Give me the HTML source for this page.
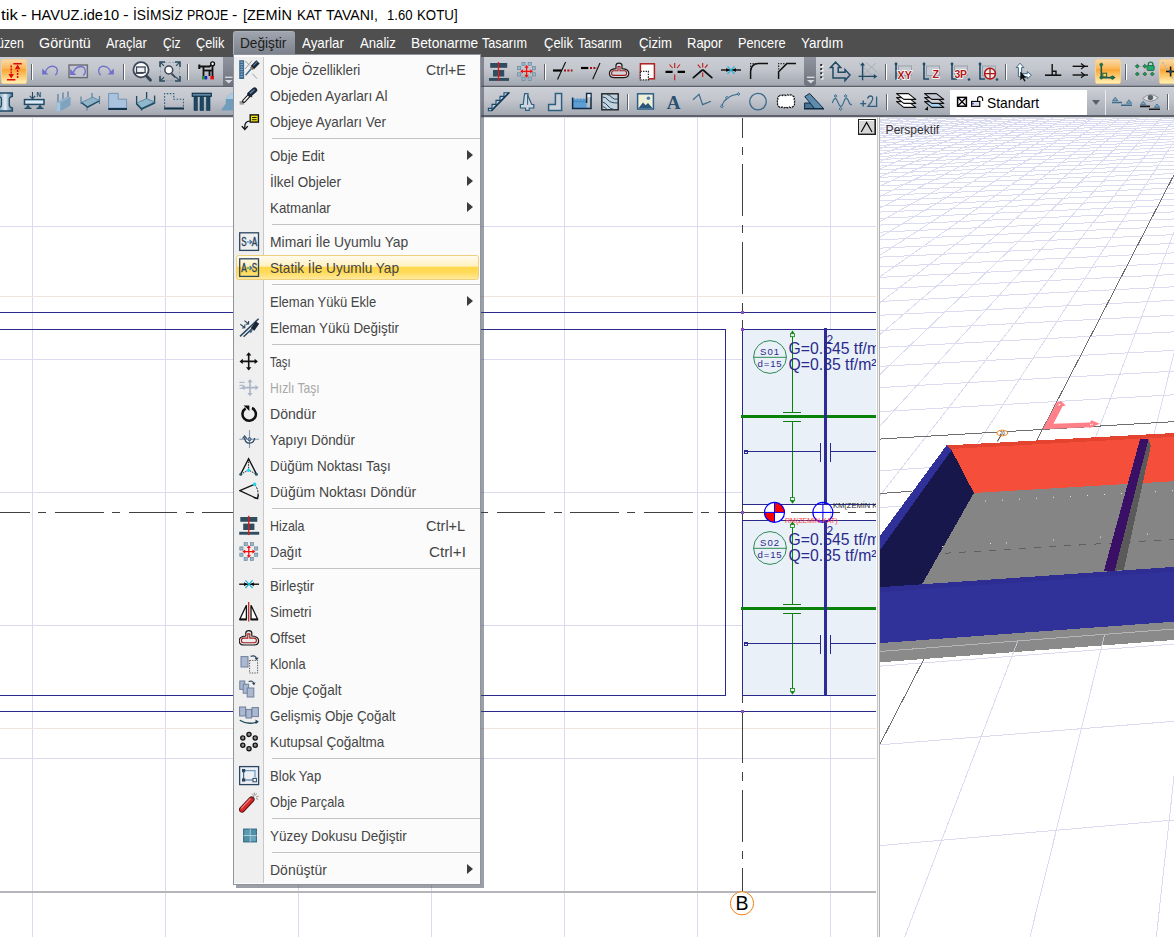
<!DOCTYPE html>
<html lang="tr"><head><meta charset="utf-8"><title>ideCAD Statik</title><style>
*{box-sizing:border-box;margin:0;padding:0}
html,body{width:1174px;height:937px;overflow:hidden;background:#fff;font-family:"Liberation Sans",sans-serif;}
#root{position:relative;width:1174px;height:937px;overflow:hidden;background:#fff}
svg{position:absolute;overflow:hidden}
.tx{position:absolute;white-space:pre;transform-origin:0 0}
#title{position:absolute;left:0;top:0;width:1174px;height:29px;background:#fff}
#menubar{position:absolute;left:0;top:29px;width:1174px;height:28px;background:#4f4f4f}
#tab{position:absolute;left:233px;top:2px;width:62px;height:26px;border-radius:3px 3px 0 0;background:linear-gradient(#9fa4ae,#787e89);border-left:1px solid #aeb2bb;border-top:1px solid #aab0b8}
.tb{position:absolute;left:0;width:1174px}
#tb1{top:57px;height:30px;background:linear-gradient(#cbced5 0px,#c3c6cd 12px,#a3a8b2 28px,#8e939c 28.5px,#5d6169 29px,#5d6169 30px)}
#tb2{top:87px;height:31px;background:linear-gradient(#d6d8dd 0px,#cbced5 1px,#c3c6cd 12px,#a3a8b2 28px,#5d6169 28.5px,#5d6169 29.5px,#c9ccd2 30px,#e4e5e9 31px)}
.cap{position:absolute;top:57px;height:29px;background:linear-gradient(#90959f,#6c717b)}
.sepv{position:absolute;width:2px;height:16px;border-left:1px solid #5d626c;background:#fff}
.act{position:absolute;height:25px;border-radius:2px;border:1px solid #f6cf8c;background:linear-gradient(#fbd9a5 0%,#fbb554 38%,#f9a534 42%,#fdd07a 75%,#fff0b4 100%)}
#canvas{position:absolute;left:0;top:118px;width:876px;height:819px;background:#fff;overflow:hidden}
#persp{position:absolute;left:880px;top:118px;width:294px;height:819px;background:#fff;overflow:hidden}
#split{position:absolute;left:877px;top:117px;width:3px;height:820px;background:linear-gradient(90deg,#c6c6c6 0,#c6c6c6 1px,#f4f4f4 1px,#f4f4f4 2px,#b2b2b2 2px,#b2b2b2 3px)}
#combo{position:absolute;left:950px;top:90px;width:137px;height:25px;background:#fff}
#combobtn{position:absolute;left:1087px;top:90px;width:19px;height:25px;background:linear-gradient(#c9ccd3,#a5aab4);border-right:1px solid #e8eaee}
#combobtn i{position:absolute;left:5px;top:10px;border-top:5px solid #5a5f69;border-left:4.5px solid transparent;border-right:4.5px solid transparent}
#popup{position:absolute;left:233px;top:54px;width:248px;height:831px;background:#fbfbfb;border:1px solid #8f949e;box-shadow:3px 3px 0 rgba(66,70,84,0.52)}
#popup .ic{position:absolute;left:0;top:2px;width:30px;height:826px;background:#efefef;border-right:1px solid #c8c8c8}
#popup .sep{position:absolute;left:38px;width:208px;height:1px;background:#c2c2c2}
#popup .arr{position:absolute;left:233px;width:0;height:0;border-left:6px solid #3c3c3c;border-top:5.5px solid transparent;border-bottom:5.5px solid transparent}
#popup .hl{position:absolute;left:1.5px;width:243.5px;height:25px;border:1px solid #ecd07c;border-radius:2.5px;background:linear-gradient(#fffbee 0%,#fff1c0 44%,#ffd74a 50%,#ffdb5c 72%,#ffe99e 100%)}
</style></head><body><div id="root">
<div id="title"><span class="tx" id="x1" style="left:1.30px;top:4.63px;font-size:15.5px;line-height:20px;font-family:'Liberation Sans',sans-serif;font-weight:400;color:#000;transform:scaleX(1.0807);">tik </span><span class="tx" id="x2" style="left:21.13px;top:4.63px;font-size:15.5px;line-height:20px;font-family:'Liberation Sans',sans-serif;font-weight:400;color:#000;transform:scaleX(1.1418);">- </span><span class="tx" id="x3" style="left:31.00px;top:4.63px;font-size:15.5px;line-height:20px;font-family:'Liberation Sans',sans-serif;font-weight:400;color:#000;transform:scaleX(0.9420);">HAVUZ.ide10 </span><span class="tx" id="x4" style="left:123.30px;top:4.63px;font-size:15.5px;line-height:20px;font-family:'Liberation Sans',sans-serif;font-weight:400;color:#000;transform:scaleX(1.1097);">- </span><span class="tx" id="x5" style="left:132.91px;top:4.63px;font-size:15.5px;line-height:20px;font-family:'Liberation Sans',sans-serif;font-weight:400;color:#000;transform:scaleX(0.8909);">İSİMSİZ </span><span class="tx" id="x6" style="left:187.03px;top:4.63px;font-size:15.5px;line-height:20px;font-family:'Liberation Sans',sans-serif;font-weight:400;color:#000;transform:scaleX(0.7992);">PROJE </span><span class="tx" id="x7" style="left:232.27px;top:4.63px;font-size:15.5px;line-height:20px;font-family:'Liberation Sans',sans-serif;font-weight:400;color:#000;transform:scaleX(1.0303);">- </span><span class="tx" id="x8" style="left:242.77px;top:4.63px;font-size:15.5px;line-height:20px;font-family:'Liberation Sans',sans-serif;font-weight:400;color:#000;transform:scaleX(0.9314);">[ZEMİN </span><span class="tx" id="x9" style="left:296.92px;top:4.63px;font-size:15.5px;line-height:20px;font-family:'Liberation Sans',sans-serif;font-weight:400;color:#000;transform:scaleX(0.8620);">KAT </span><span class="tx" id="x10" style="left:326.22px;top:4.63px;font-size:15.5px;line-height:20px;font-family:'Liberation Sans',sans-serif;font-weight:400;color:#000;transform:scaleX(0.9126);">TAVANI,  </span><span class="tx" id="x11" style="left:386.86px;top:4.63px;font-size:15.5px;line-height:20px;font-family:'Liberation Sans',sans-serif;font-weight:400;color:#000;transform:scaleX(0.8448);">1.60 </span><span class="tx" id="x12" style="left:417.10px;top:4.63px;font-size:15.5px;line-height:20px;font-family:'Liberation Sans',sans-serif;font-weight:400;color:#000;transform:scaleX(0.8572);">KOTU]</span></div>
<div id="menubar"><div id="tab"></div><span class="tx" id="x13" style="left:-3.30px;top:5.48px;font-size:13.9px;line-height:18px;font-family:'Liberation Sans',sans-serif;font-weight:400;color:#fff;transform:scaleX(0.8900);">üzen</span><span class="tx" id="x14" style="left:39.12px;top:5.48px;font-size:13.9px;line-height:18px;font-family:'Liberation Sans',sans-serif;font-weight:400;color:#fff;transform:scaleX(1.0329);">Görüntü</span><span class="tx" id="x15" style="left:106.39px;top:5.48px;font-size:13.9px;line-height:18px;font-family:'Liberation Sans',sans-serif;font-weight:400;color:#fff;transform:scaleX(0.9258);">Araçlar</span><span class="tx" id="x16" style="left:163.26px;top:5.48px;font-size:13.9px;line-height:18px;font-family:'Liberation Sans',sans-serif;font-weight:400;color:#fff;transform:scaleX(0.8715);">Çiz</span><span class="tx" id="x17" style="left:196.37px;top:5.48px;font-size:13.9px;line-height:18px;font-family:'Liberation Sans',sans-serif;font-weight:400;color:#fff;transform:scaleX(0.9161);">Çelik</span><span class="tx" id="x18" style="left:240.32px;top:5.48px;font-size:13.9px;line-height:18px;font-family:'Liberation Sans',sans-serif;font-weight:400;color:#1c1c1c;transform:scaleX(0.9824);">Değiştir</span><span class="tx" id="x19" style="left:302.35px;top:5.48px;font-size:13.9px;line-height:18px;font-family:'Liberation Sans',sans-serif;font-weight:400;color:#fff;transform:scaleX(0.9585);">Ayarlar</span><span class="tx" id="x20" style="left:360.12px;top:5.48px;font-size:13.9px;line-height:18px;font-family:'Liberation Sans',sans-serif;font-weight:400;color:#fff;transform:scaleX(0.9459);">Analiz</span><span class="tx" id="x21" style="left:410.55px;top:5.48px;font-size:13.9px;line-height:18px;font-family:'Liberation Sans',sans-serif;font-weight:400;color:#fff;transform:scaleX(0.9893);">Betonarme </span><span class="tx" id="x22" style="left:481.97px;top:5.48px;font-size:13.9px;line-height:18px;font-family:'Liberation Sans',sans-serif;font-weight:400;color:#fff;transform:scaleX(0.9113);">Tasarım</span><span class="tx" id="x23" style="left:544.19px;top:5.48px;font-size:13.9px;line-height:18px;font-family:'Liberation Sans',sans-serif;font-weight:400;color:#fff;transform:scaleX(0.9359);">Çelik </span><span class="tx" id="x24" style="left:577.70px;top:5.48px;font-size:13.9px;line-height:18px;font-family:'Liberation Sans',sans-serif;font-weight:400;color:#fff;transform:scaleX(0.8878);">Tasarım</span><span class="tx" id="x25" style="left:639.04px;top:5.48px;font-size:13.9px;line-height:18px;font-family:'Liberation Sans',sans-serif;font-weight:400;color:#fff;transform:scaleX(0.9484);">Çizim</span><span class="tx" id="x26" style="left:686.86px;top:5.48px;font-size:13.9px;line-height:18px;font-family:'Liberation Sans',sans-serif;font-weight:400;color:#fff;transform:scaleX(0.9351);">Rapor</span><span class="tx" id="x27" style="left:737.69px;top:5.48px;font-size:13.9px;line-height:18px;font-family:'Liberation Sans',sans-serif;font-weight:400;color:#fff;transform:scaleX(0.9186);">Pencere</span><span class="tx" id="x28" style="left:801.05px;top:5.48px;font-size:13.9px;line-height:18px;font-family:'Liberation Sans',sans-serif;font-weight:400;color:#fff;transform:scaleX(0.9667);">Yardım</span></div>
<div class="tb" id="tb1"></div><div class="tb" id="tb2"></div><div class="cap" style="left:223px;width:10px"></div><div class="cap" style="left:804px;width:12px;border-radius:0 0 3px 3px"></div><div class="sepv" style="left:31px;top:64px"></div><div class="sepv" style="left:123px;top:64px"></div><div class="sepv" style="left:187px;top:64px"></div><div class="sepv" style="left:544px;top:64px"></div><div class="sepv" style="left:885px;top:64px"></div><div class="sepv" style="left:1005px;top:64px"></div><div class="sepv" style="left:1125px;top:64px"></div><div class="sepv" style="left:627px;top:94px"></div><div class="sepv" style="left:886px;top:94px"></div><div class="sepv" style="left:1167px;top:94px"></div><div class="act" style="left:1px;top:59px;width:26px"></div><div class="act" style="left:1095px;top:59px;width:26px"></div><div class="act" style="left:1159px;top:59px;width:26px"></div><div id="combo"><span class="tx" id="x29" style="left:37.36px;top:3.78px;font-size:13.9px;line-height:18px;font-family:'Liberation Sans',sans-serif;font-weight:400;color:#000;transform:scaleX(0.9934);">Standart</span></div><div id="combobtn"><i></i></div><svg style="left:0;top:57px" width="1174" height="61" viewBox="0 57 1174 61" font-family="Liberation Sans, sans-serif"><g stroke="#e00a0a" fill="none" stroke-width="1.5"><path d="M7 79.8H15.4M13.3 63.8H21.8"/><path d="M11.2 65.5V76" stroke-dasharray="2 1"/><path d="M17.6 78V67" stroke-dasharray="2 1"/></g><path d="M8.4 74H14L11.2 78.6ZM14.8 69.2H20.4L17.6 64.6Z" fill="#e00a0a"/><g transform="translate(50 71)"><path d="M-4.5 1.2C-3 -4.5 3 -6.3 6.3 -3.2C8 -1.2 7.6 2.2 5.3 4.3" fill="none" stroke="#7070cc" stroke-width="1.35"/><path d="M-7.8 -2.4V3.6H-1.6Z" fill="#7070cc"/></g><rect x="69" y="65" width="18.4" height="12.6" fill="#c3c5d0" stroke="#6c6c76" stroke-width="1.4"/><g transform="translate(78 71.3)"><path d="M-4.5 1.2C-3 -4.5 3 -6.3 6.3 -3.2C8 -1.2 7.6 2.2 5.3 4.3" fill="none" stroke="#7070cc" stroke-width="1.35"/><path d="M-7.8 -2.4V3.6H-1.6Z" fill="#7070cc"/></g><g transform="translate(106 71) scale(-1 1)"><path d="M-4.5 1.2C-3 -4.5 3 -6.3 6.3 -3.2C8 -1.2 7.6 2.2 5.3 4.3" fill="none" stroke="#7070cc" stroke-width="1.35"/><path d="M-7.8 -2.4V3.6H-1.6Z" fill="#7070cc"/></g><path d="M146.5 76L150.3 80" stroke="#3a4656" stroke-width="3.2" stroke-linecap="round"/><circle cx="141" cy="69.8" r="7.6" fill="#fff" stroke="#3a4656" stroke-width="1.8"/><rect x="136.5" y="67" width="8.6" height="5.6" fill="#eef1f6" stroke="#3a4656" stroke-width="1.3"/><path d="M135 73.4H143.5" stroke="#3a4656" stroke-width="1"/><rect x="160.5" y="62.5" width="19" height="18" fill="none" stroke="#8fa2b4" stroke-dasharray="2 2"/><path d="M160 67V62H165M175 62H180V67M180 76V81H175M165 81H160V76" fill="none" stroke="#2b4a5e" stroke-width="1.6"/><path d="M161 62.8L164 65.8M179 62.8L176 65.8M161 80.2L164 77.2M179 80.2L176 77.2" stroke="#2b4a5e" stroke-width="1.2"/><path d="M171.5 73.5L175.6 77.6" stroke="#3a4656" stroke-width="1.8"/><circle cx="168.8" cy="70" r="3.9" fill="#fff" stroke="#3a4656" stroke-width="1.5"/><g fill="none" stroke="#111" stroke-width="1.8"><path d="M199.5 66.5H209.5L212 64.5"/><path d="M203.5 67V76M209.5 70V76M212.5 66V76"/><path d="M203.5 70.5H212"/><circle cx="212.6" cy="63.8" r="1.9" fill="#fff" stroke-width="1.4"/><path d="M199.3 64.5V69" stroke-width="2"/></g><rect x="202" y="76" width="2.6" height="3.4" fill="#1a9a1a"/><rect x="204.6" y="76" width="2.6" height="3.4" fill="#1a1ad0"/><rect x="210.4" y="76" width="3.6" height="3.4" fill="#e01010"/><path d="M225.0 77.3H232.5" stroke="#d6d8dd" stroke-width="1.4"/><path d="M225.0 80L228.7 83.5L232.5 80Z" fill="#d6d8dd"/><path d="M807.0 77.3H814.5" stroke="#d6d8dd" stroke-width="1.4"/><path d="M807.0 80L810.7 83.5L814.5 80Z" fill="#d6d8dd"/><rect x="490.2" y="63" width="17" height="4.8" fill="#2e4d5f"/><rect x="493" y="70" width="11.2" height="6.5" fill="#2e4d5f"/><rect x="489" y="78" width="20" height="2.9" fill="#2e4d5f"/><path d="M498.5 62V81" stroke="#f01010" stroke-width="1.3"/><rect x="532.4" y="72.8" width="3.2" height="3.2" fill="#9ab6c9" stroke="#5f8197" stroke-width="0.6"/><rect x="528.1" y="77.1" width="3.2" height="3.2" fill="#9ab6c9" stroke="#5f8197" stroke-width="0.6"/><rect x="521.9" y="77.1" width="3.2" height="3.2" fill="#9ab6c9" stroke="#5f8197" stroke-width="0.6"/><rect x="517.6" y="72.8" width="3.2" height="3.2" fill="#9ab6c9" stroke="#5f8197" stroke-width="0.6"/><rect x="517.6" y="66.6" width="3.2" height="3.2" fill="#9ab6c9" stroke="#5f8197" stroke-width="0.6"/><rect x="521.9" y="62.3" width="3.2" height="3.2" fill="#9ab6c9" stroke="#5f8197" stroke-width="0.6"/><rect x="528.1" y="62.3" width="3.2" height="3.2" fill="#9ab6c9" stroke="#5f8197" stroke-width="0.6"/><rect x="532.4" y="66.6" width="3.2" height="3.2" fill="#9ab6c9" stroke="#5f8197" stroke-width="0.6"/><path d="M521.5 71.3H531.7M526.6 66.2V76.4" stroke="#f01010" stroke-width="1.3"/><path d="M520.2 71.3L523 69.2V73.4ZM533 71.3L530.2 69.2V73.4ZM526.6 64.9L524.5 67.7H528.7ZM526.6 77.7L524.5 74.9H528.7Z" fill="#f01010"/><path d="M553 70.5H562" stroke="#000" stroke-width="2.2"/><path d="M565.6 62L557.5 79.5" stroke="#111" stroke-width="1.1"/><path d="M564 70.5H572.5" stroke="#a01010" stroke-width="1.8" stroke-dasharray="2 1.4"/><path d="M581 68H588.3" stroke="#000" stroke-width="2.2"/><path d="M600 63L592.7 79.2" stroke="#111" stroke-width="1.1"/><path d="M590 68H597" stroke="#a01010" stroke-width="1.8" stroke-dasharray="2 1.4"/><path d="M616 65.5Q616 63.2 619 63.2Q622 63.2 622 65.5V68.6Q628.8 69 628.8 73.3Q628.8 77.6 624 77.6H614Q609.4 77.6 609.4 73.3Q609.4 69 616 68.6Z" fill="#d8dae0" stroke="#1a1a1a" stroke-width="1.2"/><path d="M618 66.5H620V70.7H624.5Q626.6 70.9 626.6 73.2Q626.6 75.3 624.5 75.4H613.7Q611.6 75.3 611.6 73.2Q611.6 70.9 613.7 70.7H618Z" fill="#d2d5db" stroke="#a41c1c" stroke-width="1.1"/><rect x="640.4" y="63.8" width="14" height="15" fill="#fff" stroke="#b02020" stroke-width="1.5"/><rect x="640.4" y="71.3" width="8" height="8.6" fill="#fff" stroke="#222" stroke-width="1.2" stroke-dasharray="1.4 1.2"/><path d="M665.5 71.8H672.6M677.6 71.8H685" stroke="#000" stroke-width="2.3"/><path d="M674.7 63V68M674.7 74.5V80.3M669.5 64.5L672.5 68M680 64.5L677 68" stroke="#c01818" stroke-width="1.1"/><path d="M693.4 77.6L702 70.2M703.4 70.2L711.8 77.6" stroke="#111" stroke-width="1.8" stroke-linecap="round"/><path d="M702.7 63V67.6M702.7 72.5V77M697.8 64.6L700.5 67.8M707.6 64.6L704.9 67.8" stroke="#c01818" stroke-width="1.1"/><path d="M721 70H741" stroke="#000" stroke-width="1.3"/><path d="M729.5 70L726.3 68V72ZM732.6 70L735.8 68V72Z" fill="#000"/><path d="M727.5 66.3L734.5 73.8M734.5 66.3L727.5 73.8" stroke="#18b4d8" stroke-width="1.2"/><path d="M750.6 79V71.5Q751 63.8 758.5 63.6H768" fill="none" stroke="#111" stroke-width="1.5"/><path d="M750.6 69.5V63.6H756.5" fill="none" stroke="#222" stroke-width="1.2" stroke-dasharray="1.3 1.3"/><path d="M778.6 79V71.8L786.8 63.6H796" fill="none" stroke="#111" stroke-width="1.5"/><path d="M778.6 69.5V63.6H784.5" fill="none" stroke="#222" stroke-width="1.2" stroke-dasharray="1.3 1.3"/><rect x="821" y="64.8" width="2.4" height="2.4" fill="#fff"/><rect x="820.2" y="64.0" width="2" height="2" fill="#2a2e36"/><rect x="821" y="68.89999999999999" width="2.4" height="2.4" fill="#fff"/><rect x="820.2" y="68.1" width="2" height="2" fill="#2a2e36"/><rect x="821" y="73.0" width="2.4" height="2.4" fill="#fff"/><rect x="820.2" y="72.2" width="2" height="2" fill="#2a2e36"/><rect x="821" y="77.1" width="2.4" height="2.4" fill="#fff"/><rect x="820.2" y="76.3" width="2" height="2" fill="#2a2e36"/><path d="M830.5 67.6L835.6 62.2L840.7 67.6H838.2V72.3H845V69.6L850 75.1L845 80.6V78H833V67.6Z" fill="none" stroke="#1f4a66" stroke-width="1.5" stroke-linejoin="miter"/><path d="M859 63L875 78M876 63L861 77M866 62.5L877 72" stroke="#a9adb9" stroke-width="1"/><path d="M862.6 64V80.3M858.6 76.4H875.5" stroke="#1f4a66" stroke-width="1.4"/><path d="M862.6 62.2L860.2 65.6H865ZM877.2 76.4L873.8 74V78.8Z" fill="#1f4a66"/><path d="M896 64V79H901" fill="none" stroke="#1f4a66" stroke-width="1.6"/><circle cx="896" cy="64" r="1.4" fill="#1f4a66"/><rect x="898.5" y="66" width="13" height="9.5" fill="#c6cad2" stroke="#9aa0aa" stroke-width="1"/><text x="897.6" y="79.4" font-size="10.6" font-weight="700" fill="#b01414" stroke="#fff" stroke-width="1.6" paint-order="stroke" letter-spacing="0">XY</text><path d="M924 64V79H929" fill="none" stroke="#1f4a66" stroke-width="1.6"/><circle cx="924" cy="64" r="1.4" fill="#1f4a66"/><rect x="926.5" y="66" width="13" height="9.5" fill="#c6cad2" stroke="#9aa0aa" stroke-width="1"/><text x="932.6" y="78.4" font-size="10.6" font-weight="700" fill="#b01414" stroke="#fff" stroke-width="1.6" paint-order="stroke" letter-spacing="0">Z</text><path d="M952 64V79H957" fill="none" stroke="#1f4a66" stroke-width="1.6"/><circle cx="952" cy="64" r="1.4" fill="#1f4a66"/><rect x="954.5" y="66" width="13" height="9.5" fill="#c6cad2" stroke="#9aa0aa" stroke-width="1"/><text x="954.6" y="78.4" font-size="10.4" font-weight="700" fill="#b01414" stroke="#fff" stroke-width="1.6" paint-order="stroke" letter-spacing="-0.3">3P</text><circle cx="969" cy="79.5" r="1.3" fill="#1f4a66"/><path d="M980 64V79H985" fill="none" stroke="#1f4a66" stroke-width="1.6"/><circle cx="980" cy="64" r="1.4" fill="#1f4a66"/><rect x="982.5" y="66" width="13" height="9.5" fill="#c6cad2" stroke="#9aa0aa" stroke-width="1"/><circle cx="990" cy="73.6" r="5.4" fill="#eee" stroke="#b01414" stroke-width="1.5"/><path d="M984.6 73.6H995.4M990 68.2V79" stroke="#b01414" stroke-width="1.3"/><circle cx="997" cy="79.5" r="1.3" fill="#1f4a66"/><path d="M1016.2 67.5L1020 63.2L1023.8 67.5H1021.6V73.7H1027.3V71.6L1031.4 75.2L1027.3 78.8V76.7H1018.4V67.5Z" fill="#fff" stroke="#3a6a8a" stroke-width="1"/><path d="M1020.3 71.5V80.3L1022.5 78.3L1024.3 81.6L1025.6 80.9L1023.9 77.7H1026.6Z" fill="#111"/><path d="M1045 75.2H1061.3" stroke="#111" stroke-width="1.6"/><path d="M1052.2 64V75" stroke="#111" stroke-width="1.4"/><path d="M1052.5 71.3H1056V75" fill="none" stroke="#111" stroke-width="1.4"/><path d="M1072.6 66.3 H1088" stroke="#111" stroke-width="1.4"/><path d="M1081 63.5 L1084.6 66.3 L1081 69.1" fill="none" stroke="#111" stroke-width="1.2"/><path d="M1072.6 75 H1088" stroke="#111" stroke-width="1.4"/><path d="M1081 72.2 L1084.6 75 L1081 77.8" fill="none" stroke="#111" stroke-width="1.2"/><rect x="1102.8" y="73.2" width="3.8" height="3.8" fill="#f4d84a" stroke="#1e5a4e" stroke-width="1"/><path d="M1101.3 64.2V77.6H1114" fill="none" stroke="#1e5a4e" stroke-width="1.6"/><path d="M1115.6 77.6L1112.4 75.2V80Z" fill="#1e5a4e"/><circle cx="1101.3" cy="64.6" r="1.4" fill="#168048" stroke="#1e5a4e" stroke-width="0.8"/><circle cx="1101.3" cy="77.6" r="1.4" fill="#168048" stroke="#1e5a4e" stroke-width="0.8"/><circle cx="1112" cy="77.6" r="1.4" fill="#168048" stroke="#1e5a4e" stroke-width="0.8"/><path d="M1134 66.2H1155M1134 74H1155M1137.3 62V81M1144.8 62V81M1152.3 62V81" stroke="#c9b6c0" stroke-width="1"/><path d="M1137.3 64.2l2 2l-2 2l-2 -2Z" fill="#1a9a50" stroke="#14503c" stroke-width="0.6"/><path d="M1144.8 64.2l2 2l-2 2l-2 -2Z" fill="#1a9a50" stroke="#14503c" stroke-width="0.6"/><path d="M1137.3 72l2 2l-2 2l-2 -2Z" fill="#1a9a50" stroke="#14503c" stroke-width="0.6"/><path d="M1144.8 72l2 2l-2 2l-2 -2Z" fill="#1a9a50" stroke="#14503c" stroke-width="0.6"/><path d="M1152.3 72l2 2l-2 2l-2 -2Z" fill="#1a9a50" stroke="#14503c" stroke-width="0.6"/><path d="M1148.3 66V64.3Q1148.3 62.2 1150.6 62.2Q1152.9 62.2 1152.9 64.3V66" fill="none" stroke="#1a7a4a" stroke-width="1.3"/><rect x="1147" y="65.6" width="7.2" height="4.8" rx="0.8" fill="#22aa66" stroke="#14603c" stroke-width="0.8"/><path d="M1162.5 62L1174 80" stroke="#9ab4cc" stroke-width="1.1" stroke-dasharray="2 1.5"/><path d="M1166 71.6H1176M1170.6 66.5V76.5" stroke="#111" stroke-width="1.5"/><circle cx="1170.6" cy="71.6" r="1.8" fill="#1f4a66"/><defs><linearGradient id="gib" x1="0" x2="1"><stop offset="0" stop-color="#6f97b4"/><stop offset="0.5" stop-color="#e4eef6"/><stop offset="1" stop-color="#4a7592"/></linearGradient></defs><path d="M-2 93H12.4V96.4Q9.3 96.8 9.3 99V105Q9.3 107.4 12.4 107.8V111H-2V107.8Q1.4 107.4 1.4 105V99Q1.4 96.8 -2 96.4Z" fill="url(#gib)" stroke="#1f4a66" stroke-width="1.3"/><rect x="24.5" y="99.6" width="19.5" height="4.8" fill="#dbe8f6" stroke="#1f4a66" stroke-width="1.5"/><path d="M25.5 107.8L28 104.8L30.5 107.8ZM37.5 107.8L40 104.8L42.5 107.8Z" fill="#1f4a66"/><path d="M24.5 108.3H31.5M36.5 108.3H43.5" stroke="#1f4a66" stroke-width="1.2"/><path d="M32.5 92V98.6M29.8 95.8L32.5 98.8L35.2 95.8" fill="none" stroke="#1f4a66" stroke-width="1.1"/><text x="36.6" y="96.6" font-size="6.4" font-weight="700" fill="#1f4a66">N</text><path d="M58 102V94M63 100V92.4M68 98V91.6" stroke="#5a82a0" stroke-width="1.3"/><path d="M56.3 102.5L60.3 102.5L70.6 97V105.6L60.3 111.3H56.3Z" fill="#7fa3bf"/><path d="M56.3 102.5H60.3V111.3H56.3Z" fill="#a7c4dc"/><path d="M56.3 102.5L66.5 97H70.6L60.3 102.5Z" fill="#8fb1cb"/><path d="M81 96.5V104M92 93V98M99.5 96V104M87 103V110.5" stroke="#5a82a0" stroke-width="1.2"/><path d="M81.5 102.3L93 97.2L99.3 100.4L87.6 106.6Z" fill="#8fb4c8" stroke="#5a86a2" stroke-width="0.8"/><path d="M81.5 102.8L87.6 107.2L99.3 101" fill="none" stroke="#1f4a66" stroke-width="1.4"/><path d="M108.6 93.4H118.2V99.2H126.6V108H108.6Z" fill="#a9c2de" stroke="#6f8fb0" stroke-width="0.9"/><path d="M108.2 109H127" stroke="#12344c" stroke-width="2"/><path d="M136.6 96V104.5M146.6 92V99M154.6 95.5V103.5M141.6 103.5V110.5" stroke="#1f4a66" stroke-width="1.3"/><path d="M137 103L146.5 98.6L154.4 102L141.8 108.2Z" fill="#8fb8cc" stroke="#4f7f9c" stroke-width="0.8"/><path d="M136.6 104L141.6 109L154.6 103" fill="none" stroke="#1f4a66" stroke-width="1.5"/><path d="M164.6 107V93.6H173.8V99.2H183.4V107" fill="none" stroke="#2f5f80" stroke-width="1.1" stroke-dasharray="1.6 1.5"/><path d="M164 108.5H184" stroke="#12344c" stroke-width="2.1"/><path d="M194 96.5H197.4V110.5H194ZM200 96.5H203.6V110.5H200ZM206.4 96.5H210V110.5H206.4Z" fill="#1c4866" stroke="#12344c" stroke-width="0.6"/><rect x="192.3" y="93.3" width="19" height="3" fill="#5f88a4" stroke="#12344c" stroke-width="1.2"/><path d="M221 110.5L225.8 103.5V99L230.5 93.5H236V110.5Z" fill="#6f9dbb"/><path d="M225.8 99L230.5 93.5H236V99Z" fill="#a9cbe4"/><path d="M488.4 108.4H492V104.4H496V100.4H500V96.4H504V92.7H509L491.4 110.8H488.4Z" fill="#b4cfe8" stroke="#1f4a66" stroke-width="1.1" stroke-linejoin="miter"/><path d="M509 92.7L491.4 110.8" stroke="#12344c" stroke-width="1.6"/><path d="M524.6 93.6H528V96L531.8 104.5H533.8V108H529.2V110.4H525.6V108H520.4V104.5H523.2Z" fill="#cfd6df" stroke="#2f5f80" stroke-width="1.2"/><path d="M527.6 95V104.8" stroke="#2f5f80" stroke-width="1"/><path d="M555.4 93.6H561.6V110.4H548.6V104.4H555.4Z" fill="#cbd1da" stroke="#2f5f80" stroke-width="1.5"/><path d="M572.6 99.2L574.2 98L575.8 99.2L577.4 98L579 99.2L580.6 98L582.2 99.2L583.8 98L585.4 99.2L586.6 98.4V108.4H572.6Z" fill="#5d9fd3"/><path d="M573 102L574.6 100.8L576.2 102L577.8 100.8L579.4 102L581 100.8L582.6 102L584.2 100.8L585.8 102" fill="none" stroke="#3d7fb6" stroke-width="0.9"/><path d="M572.6 97.5V108.6H591V93.5H586.6V103" fill="none" stroke="#0f2a44" stroke-width="1.5"/><rect x="587.6" y="94.2" width="2.8" height="3" fill="#e8eef4"/><rect x="601.8" y="93.8" width="16.4" height="16" fill="#c3d1dc" stroke="#222" stroke-width="1.4"/><path d="M602.5 97Q606 97 608 100T618 103M602.5 102Q606 103 608 106T614 109.5M607 94.5Q610 95 612 97.5T618 99M602.5 106.5Q605 107 607 109.5" fill="none" stroke="#1f4a66" stroke-width="1"/><rect x="637.6" y="93.8" width="15.8" height="15.2" fill="#eff0d6" stroke="#2b5f8a" stroke-width="1.5"/><path d="M638.4 108.3L643 102.6L645.6 105.2L648 103L652.6 108.3Z" fill="#2b557a"/><circle cx="648.4" cy="98.2" r="1.8" fill="#4a7fb0"/><text x="673.5" y="109.4" font-size="19" font-weight="700" font-family="Liberation Serif, serif" fill="#2b5070" text-anchor="middle">A</text><path d="M693 99.8L699 94.4L702.6 104.6L711 101.2" fill="none" stroke="#3a6a8a" stroke-width="1.2"/><path d="M721.6 106.4Q724.5 96 738.4 94" fill="none" stroke="#3a6a8a" stroke-width="1.2"/><path d="M721.8 104.80000000000001l1.6 1.6l-1.6 1.6l-1.6 -1.6Z" fill="#7fa6c4" stroke="#3a6a8a" stroke-width="0.8"/><path d="M727 96.2l1.6 1.6l-1.6 1.6l-1.6 -1.6Z" fill="#7fa6c4" stroke="#3a6a8a" stroke-width="0.8"/><path d="M738.4 92.4l1.6 1.6l-1.6 1.6l-1.6 -1.6Z" fill="#7fa6c4" stroke="#3a6a8a" stroke-width="0.8"/><circle cx="758" cy="101.6" r="8.3" fill="none" stroke="#3a6a8a" stroke-width="1.3"/><path d="M779 96.2Q780.5 94.2 782.3 95.6Q784 94 785.8 95.6Q787.6 94 789.4 95.6Q791.2 94 793 96Q795.4 97.4 794 99.4Q795.6 101 794 102.8Q795.4 104.8 793.2 106.4Q791.4 108.6 789.4 107Q787.6 108.6 785.8 107Q784 108.6 782.2 107Q780.2 108.4 778.8 106.4Q776.6 104.8 778 102.8Q776.6 101 778 99.4Q776.8 97.4 779 96.2Z" fill="#fff" stroke="#111" stroke-width="1.2" stroke-dasharray="2.2 0.8"/><path d="M804.6 103H814V108.6H804.6Z" fill="#4a7394" stroke="#0f2a44" stroke-width="1"/><path d="M804.8 96.6L809.6 93.4L823.6 108.6H814.6Z" fill="#5f8cac" stroke="#0f2a44" stroke-width="1"/><path d="M804 108.8H824" stroke="#0f2a44" stroke-width="1.4"/><path d="M832.4 103C833.8 98 835.4 97.6 836.6 99.6C838.4 102.6 839 106.4 840.8 106.4C842.6 106.4 843.4 102.6 844.8 99.6C846 97.4 847.4 98 848.4 100.8C849.4 103.6 850.2 105 851.8 104.4" fill="none" stroke="#3a6a8a" stroke-width="1.2"/><path d="M835.6 94.4l1.6 1.6l-1.6 1.6l-1.6 -1.6Z" fill="#7fa6c4" stroke="#3a6a8a" stroke-width="0.8"/><path d="M845.6 94.4l1.6 1.6l-1.6 1.6l-1.6 -1.6Z" fill="#7fa6c4" stroke="#3a6a8a" stroke-width="0.8"/><path d="M840.6 107.4l1.6 1.6l-1.6 1.6l-1.6 -1.6Z" fill="#7fa6c4" stroke="#3a6a8a" stroke-width="0.8"/><path d="M860.2 103.6H866.2M863.2 100.6V106.6" stroke="#2f5f80" stroke-width="1.4"/><path d="M867.6 98.6Q868.4 95.8 870.8 96Q873.2 96.4 872.6 99.4Q871.6 102.4 868 106.4H873.4M876.6 96.6V106.4H872" fill="none" stroke="#2f5f80" stroke-width="1.3"/><path d="M896.6 101.6L908.4000000000001 101.6L915.8000000000001 107.39999999999999L903.8000000000001 107.39999999999999Z" fill="#fff" stroke="#111" stroke-width="1.2" stroke-linejoin="round"/><path d="M896.6 97.6L908.4000000000001 97.6L915.8000000000001 103.39999999999999L903.8000000000001 103.39999999999999Z" fill="#fff" stroke="#111" stroke-width="1.2" stroke-linejoin="round"/><path d="M896.6 93.6L908.4000000000001 93.6L915.8000000000001 99.39999999999999L903.8000000000001 99.39999999999999Z" fill="#fff" stroke="#111" stroke-width="1.2" stroke-linejoin="round"/><path d="M924.6 101.6L936.4000000000001 101.6L943.8000000000001 107.39999999999999L931.8000000000001 107.39999999999999Z" fill="#a9d0f0" stroke="#111" stroke-width="1.2" stroke-linejoin="round"/><path d="M924.6 97.6L936.4000000000001 97.6L943.8000000000001 103.39999999999999L931.8000000000001 103.39999999999999Z" fill="#d0d4da" stroke="#111" stroke-width="1.2" stroke-linejoin="round"/><path d="M924.6 93.6L936.4000000000001 93.6L943.8000000000001 99.39999999999999L931.8000000000001 99.39999999999999Z" fill="#c6cad2" stroke="#111" stroke-width="1.2" stroke-linejoin="round"/><path d="M924.6 109.6L928 106.2V110.6Z" fill="#111"/><rect x="957.6" y="97.4" width="8.8" height="8.8" fill="#fff" stroke="#000" stroke-width="1.5"/><path d="M958 97.8L966 105.8M966 97.8L958 105.8" stroke="#000" stroke-width="1.3"/><rect x="971.6" y="101.4" width="8.2" height="5" fill="#d8dce4" stroke="#000" stroke-width="1.1"/><path d="M977.6 101.2V98.6Q977.8 96.6 980 96.6Q982.4 96.6 982.6 98.6V101" fill="none" stroke="#111" stroke-width="1.2"/><rect x="972.2" y="102.8" width="1.4" height="1.6" fill="#2020e0"/><path d="M1112 102.4H1122M1121 105.2H1132" stroke="#3a6a8a" stroke-width="1.5"/><path d="M1112.6 100.6L1115.2 97.2L1117.8 100.6ZM1126.4 103.2L1129 99.8L1131.6 103.2Z" fill="#7fa6c4" stroke="#3a6a8a" stroke-width="0.8"/><path d="M1142.6 98.6Q1150 91.2 1158.4 97.6Q1151 104.6 1142.6 98.6Z" fill="#dfe1e5" stroke="#8a8f99" stroke-width="1"/><circle cx="1150.4" cy="97.6" r="2.7" fill="#5a6068"/><path d="M1140 106.4H1150M1149 109.2H1160" stroke="#1a1a1a" stroke-width="1.6"/><path d="M1140.6 104.6L1143.2 101.2L1145.8 104.6ZM1154.4 107.4L1157 104L1159.6 107.4Z" fill="#7fa6c4" stroke="#3a6a8a" stroke-width="0.8"/></svg>
<div id="canvas"><svg style="left:0;top:0" width="877" height="819" viewBox="0 118 877 819" shape-rendering="crispEdges"><line x1="32.5" y1="118" x2="32.5" y2="937" stroke="#dadaf0" stroke-width="1"/><line x1="165.5" y1="118" x2="165.5" y2="937" stroke="#dadaf0" stroke-width="1"/><line x1="298.5" y1="118" x2="298.5" y2="937" stroke="#dadaf0" stroke-width="1"/><line x1="431.5" y1="118" x2="431.5" y2="937" stroke="#dadaf0" stroke-width="1"/><line x1="564.5" y1="118" x2="564.5" y2="937" stroke="#dadaf0" stroke-width="1"/><line x1="697.5" y1="118" x2="697.5" y2="937" stroke="#dadaf0" stroke-width="1"/><line x1="830.5" y1="118" x2="830.5" y2="937" stroke="#dadaf0" stroke-width="1"/><line x1="0" y1="226.5" x2="877" y2="226.5" stroke="#dadaf0" stroke-width="1"/><line x1="0" y1="359.5" x2="877" y2="359.5" stroke="#dadaf0" stroke-width="1"/><line x1="0" y1="492.5" x2="877" y2="492.5" stroke="#dadaf0" stroke-width="1"/><line x1="0" y1="625.5" x2="877" y2="625.5" stroke="#dadaf0" stroke-width="1"/><line x1="0" y1="758.5" x2="877" y2="758.5" stroke="#dadaf0" stroke-width="1"/><line x1="0" y1="892" x2="877" y2="892" stroke="#b6b6ba" stroke-width="2"/><line x1="0" y1="296.5" x2="877" y2="296.5" stroke="#f0e4dc" stroke-width="1"/><line x1="0" y1="728.5" x2="877" y2="728.5" stroke="#f0e4dc" stroke-width="1"/><rect x="742" y="329" width="135" height="175" fill="#e9f0f8"/><rect x="742" y="521" width="135" height="175" fill="#e9f0f8"/><line x1="-18.5" y1="512.5" x2="877" y2="512.5" stroke="#404040" stroke-width="1" stroke-dasharray="48.7 8.3 8 8.6"/><line x1="742.5" y1="85.8" x2="742.5" y2="892" stroke="#404040" stroke-width="1" stroke-dasharray="52 9 8.4 8.8"/><line x1="0" y1="312.5" x2="877" y2="312.5" stroke="#2a2a8c" stroke-width="1"/><line x1="0" y1="711.5" x2="877" y2="711.5" stroke="#2a2a8c" stroke-width="1"/><path d="M0 329.5H725.5V695.5H0" fill="none" stroke="#2a2a8c" stroke-width="1"/><path d="M877 329.5H742.5V504.5H877M877 520.5H742.5V695.5H877" fill="none" stroke="#2a2a8c" stroke-width="1"/><rect x="741.0" y="311.0" width="3" height="3" fill="#8a50c8"/><rect x="741.0" y="328.0" width="3" height="3" fill="#8a50c8"/><rect x="741.0" y="511.0" width="3" height="3" fill="#8a50c8"/><rect x="741.0" y="710.0" width="3" height="3" fill="#8a50c8"/><line x1="792.5" y1="331" x2="792.5" y2="412.5" stroke="#0a820a" stroke-width="1"/><line x1="792.5" y1="421.5" x2="792.5" y2="503" stroke="#0a820a" stroke-width="1"/><line x1="792.5" y1="522" x2="792.5" y2="604.5" stroke="#0a820a" stroke-width="1"/><line x1="792.5" y1="613.5" x2="792.5" y2="694" stroke="#0a820a" stroke-width="1"/><line x1="741" y1="416.5" x2="877" y2="416.5" stroke="#0a820a" stroke-width="3"/><line x1="783" y1="412.5" x2="801" y2="412.5" stroke="#0a820a" stroke-width="1"/><line x1="783" y1="421.5" x2="801" y2="421.5" stroke="#0a820a" stroke-width="1"/><line x1="741" y1="608.5" x2="877" y2="608.5" stroke="#0a820a" stroke-width="3"/><line x1="783" y1="604.5" x2="801" y2="604.5" stroke="#0a820a" stroke-width="1"/><line x1="783" y1="613.5" x2="801" y2="613.5" stroke="#0a820a" stroke-width="1"/><line x1="745" y1="451.5" x2="821" y2="451.5" stroke="#2a2a8c" stroke-width="1"/><line x1="830" y1="451.5" x2="877" y2="451.5" stroke="#2a2a8c" stroke-width="1"/><line x1="820.5" y1="442.5" x2="820.5" y2="461.5" stroke="#2a2a8c" stroke-width="1"/><line x1="830.5" y1="442.5" x2="830.5" y2="461.5" stroke="#2a2a8c" stroke-width="1"/><rect x="744.5" y="450.0" width="3" height="3" fill="none" stroke="#2a2a8c"/><line x1="745" y1="643.5" x2="821" y2="643.5" stroke="#2a2a8c" stroke-width="1"/><line x1="830" y1="643.5" x2="877" y2="643.5" stroke="#2a2a8c" stroke-width="1"/><line x1="820.5" y1="634.5" x2="820.5" y2="653.5" stroke="#2a2a8c" stroke-width="1"/><line x1="830.5" y1="634.5" x2="830.5" y2="653.5" stroke="#2a2a8c" stroke-width="1"/><rect x="744.5" y="642.0" width="3" height="3" fill="none" stroke="#2a2a8c"/><line x1="825.5" y1="328" x2="825.5" y2="504" stroke="#2c2c94" stroke-width="3"/><line x1="825.5" y1="521" x2="825.5" y2="696" stroke="#2c2c94" stroke-width="3"/></svg><svg style="left:0;top:0" width="877" height="819" viewBox="0 118 877 819" font-family="Liberation Sans, sans-serif"><path d="M792.5 330.5l-2.2 3.2h4.4Z" fill="#0a820a"/><rect x="790.6" y="333.7" width="3.8" height="3" fill="#e9f0f8" stroke="#0a820a" stroke-width="0.8"/><path d="M792.5 503.8l-2.2 -3.2h4.4Z" fill="#0a820a"/><rect x="790.6" y="497.6" width="3.8" height="3" fill="#e9f0f8" stroke="#0a820a" stroke-width="0.8"/><path d="M792.5 521.4l-2.2 3.2h4.4Z" fill="#0a820a"/><rect x="790.6" y="524.6" width="3.8" height="3" fill="#e9f0f8" stroke="#0a820a" stroke-width="0.8"/><path d="M792.5 694.6l-2.2 -3.2h4.4Z" fill="#0a820a"/><rect x="790.6" y="688.4" width="3.8" height="3" fill="#e9f0f8" stroke="#0a820a" stroke-width="0.8"/><circle cx="770" cy="357" r="16.4" fill="none" stroke="#2e8b57" stroke-width="1"/><line x1="753.6" y1="357.3" x2="786.4" y2="357.3" stroke="#2e8b57" stroke-width="1"/><text x="770" y="354.9" font-size="9.6" fill="#2a2a8c" text-anchor="middle" letter-spacing="0.9">S01</text><text x="770" y="366.9" font-size="9.6" fill="#2a2a8c" text-anchor="middle" letter-spacing="0.9">d=15</text><text x="826.6" y="343.8" font-size="12" fill="#2a2a8c">2</text><g transform="translate(788.6 0) scale(0.985 1)"><text x="0" y="354.3" font-size="16" fill="#2a2a8c">G=0.545 tf/m²</text><text x="0" y="370.4" font-size="16" fill="#2a2a8c">Q=0.35 tf/m²</text></g><circle cx="770" cy="548" r="16.4" fill="none" stroke="#2e8b57" stroke-width="1"/><line x1="753.6" y1="548.3" x2="786.4" y2="548.3" stroke="#2e8b57" stroke-width="1"/><text x="770" y="545.9" font-size="9.6" fill="#2a2a8c" text-anchor="middle" letter-spacing="0.9">S02</text><text x="770" y="557.9" font-size="9.6" fill="#2a2a8c" text-anchor="middle" letter-spacing="0.9">d=15</text><text x="826.6" y="534.8" font-size="12" fill="#2a2a8c">2</text><g transform="translate(788.6 0) scale(0.985 1)"><text x="0" y="545.3" font-size="16" fill="#2a2a8c">G=0.545 tf/m²</text><text x="0" y="561.4" font-size="16" fill="#2a2a8c">Q=0.35 tf/m²</text></g><g transform="translate(774.5 512.4)"><circle r="10" fill="#fff"/><path d="M0 0V-10A10 10 0 0 1 10 0Z M0 0V10A10 10 0 0 1 -10 0Z" fill="#ff0000"/><path d="M-10 0H10M0 -10V10" stroke="#0000ff" stroke-width="1" fill="none"/><circle r="10" fill="none" stroke="#0000ff" stroke-width="1.2"/></g><g transform="translate(822.9 512.4)"><circle r="10" fill="none" stroke="#0000ff" stroke-width="1.2"/><path d="M-10 0H10M0 -10V10" stroke="#0000ff" stroke-width="1" fill="none"/></g><text x="833" y="508.2" font-size="7.4" fill="#222" textLength="56" lengthAdjust="spacingAndGlyphs">KM(ZEMİN KAT)</text><text x="785" y="523.2" font-size="7.4" fill="#ff3838" textLength="52.5" lengthAdjust="spacingAndGlyphs">RM(ZEMİN KAT)</text><circle cx="742" cy="903.3" r="11.6" fill="#fff" stroke="#f08018" stroke-width="1"/><text x="742" y="910.3" font-size="19.5" fill="#000" text-anchor="middle">B</text><rect x="858" y="119" width="18" height="16" fill="#1e1e1e"/><rect x="859" y="120" width="15.4" height="13.6" fill="#d6d6d6"/><path d="M859 120.5H874" stroke="#fff" stroke-width="1"/><path d="M861.2 132L866.6 122.4L872 132" fill="none" stroke="#000" stroke-width="1.1"/></svg></div>
<div id="split"></div>
<div id="persp"><svg style="left:0;top:0" width="294" height="819" viewBox="880 118 294 819" font-family="Liberation Sans, sans-serif"><path d="M879.0 117.7L898.4 117.0M879.0 119.3L939.8 117.0M879.0 120.9L982.4 117.0M879.0 122.5L1026.2 117.0M879.0 124.2L1071.2 117.0M879.0 126.0L1117.4 117.0M879.0 127.9L1165.0 117.0M879.0 129.8L1175.0 118.5M879.0 131.7L1175.0 120.4M879.0 133.8L1175.0 122.4M879.0 135.9L1175.0 124.5M879.0 138.1L1175.0 126.7M879.0 140.4L1175.0 128.9M879.0 142.8L1175.0 131.3M879.0 145.3L1175.0 133.7M879.0 147.9L1175.0 136.2M879.0 150.6L1175.0 138.9M879.0 153.4L1175.0 141.7M879.0 156.4L1175.0 144.6M879.0 159.5L1175.0 147.6M879.0 162.7L1175.0 150.8M879.0 166.1L1175.0 154.1M879.0 169.7L1175.0 157.6M879.0 173.4L1175.0 161.3M879.0 177.4L1175.0 165.1M879.0 181.5L1175.0 169.2M879.0 185.9L1175.0 173.5M879.0 190.6L1175.0 178.1M879.0 195.5L1175.0 182.9M879.0 200.7L1175.0 188.0M879.0 206.2L1175.0 193.4M879.0 212.1L1175.0 199.1M879.0 218.3L1175.0 205.3M879.0 225.1L1175.0 211.8M879.0 232.2L1175.0 218.9M879.0 239.9L1175.0 226.4M879.0 248.2L1175.0 234.6M879.0 257.2L1175.0 243.3M879.0 266.9L1175.0 252.8M879.0 277.4L1175.0 263.2M879.0 288.9L1175.0 274.4M879.0 301.5L1175.0 286.7M879.0 315.3L1175.0 300.3M879.0 330.6L1175.0 315.2M879.0 347.5L1175.0 331.8M879.0 366.4L1175.0 350.3M879.0 387.6L1175.0 371.1M879.0 411.7L1175.0 394.7M879.0 470.8L1175.0 452.6M879.0 507.6L1175.0 488.6M879.0 551.0L1175.0 531.2M879.0 602.9L1175.0 582.1M879.0 666.2L1175.0 644.0M879.0 744.9L1175.0 721.2M879.0 845.7L1175.0 819.9M879.0 118.3L883.7 117.0M879.0 121.8L895.3 117.0M879.0 125.5L907.1 117.0M879.0 129.4L918.9 117.0M879.0 133.7L930.8 117.0M879.0 138.4L942.8 117.0M879.0 143.4L954.9 117.0M879.0 149.0L967.1 117.0M879.0 155.1L979.3 117.0M879.0 161.7L991.7 117.0M879.0 169.1L1004.2 117.0M879.0 177.3L1016.8 117.0M879.0 186.5L1029.4 117.0M879.0 196.9L1042.2 117.0M879.0 208.6L1055.1 117.0M879.0 222.1L1068.0 117.0M879.0 237.7L1081.1 117.0M879.0 255.8L1094.3 117.0M879.0 277.4L1107.6 117.0M879.0 303.4L1121.0 117.0M879.0 335.3L1134.5 117.0M879.0 375.3L1148.2 117.0M879.0 427.1L1161.9 117.0M879.0 496.8L1175.0 118.0M879.0 595.5L1175.0 139.7M904.3 938.0L1175.0 229.5M1029.7 938.0L1175.0 349.2M1156.2 938.0L1175.0 767.2" stroke="#dcdcf0" stroke-width="1" fill="none" shape-rendering="crispEdges"/><path d="M879.0 439.1L1175.0 421.6" stroke="#6e6e6e" fill="none" shape-rendering="crispEdges"/><path d="M879.0 746.0L1175.0 172.8" stroke="#6e6e6e" fill="none" shape-rendering="crispEdges"/><line x1="880" y1="493.5" x2="912.4" y2="491.2" stroke="#6e6e6e" stroke-width="1" shape-rendering="crispEdges"/><path d="M1042.6 429.2L1056.4 403.4L1051.1 406.4L1057 402.2L1061 400.9L1065.8 405.7L1062.7 406L1053.5 423.7L1090 422.6L1091.3 420.3L1099.8 423.7L1088.6 428.5L1089.5 427.2Z" fill="#ff8088"/><path d="M1058.3 404.6l1.8 -0.8l0.4 1l-1.8 0.9ZM1090.2 423.4l1.6 1l1.2 -1.2l-0.4 2l-1 -0.6l-1.4 1.2Z" fill="#fff"/><ellipse cx="1002.3" cy="433" rx="5.5" ry="2.8" fill="#fff" stroke="#f08018"/><text x="1002.3" y="434.6" font-size="4.6" fill="#222" text-anchor="middle">20</text><line x1="1000.8" y1="435.6" x2="997.4" y2="441.5" stroke="#333" stroke-width="1"/><g shape-rendering="crispEdges"><polygon points="946.5,445.4 1174,433 1174,481.2 973.9,493" fill="#f54e3a"/><polygon points="946.5,445.4 1174,433 1174,436.8 949.6,449" fill="#e4442f"/><polygon points="973.9,493 1174,481.2 1174,569 921,586" fill="#858585"/><polygon points="951.6,450 973.9,493 921,586 880,589 880,550" fill="#17174b"/><polygon points="946.5,445.4 951.6,450 880,550 880,535.8" fill="#30309a"/></g><line x1="944.5" y1="553.3" x2="1174" y2="539.2" stroke="#606060" stroke-width="1" stroke-dasharray="7 8" shape-rendering="crispEdges"/><rect x="985.0" y="500.6" width="1" height="1" fill="#e8e8e8"/><rect x="1002.0" y="499.7" width="1" height="1" fill="#e8e8e8"/><rect x="1019.0" y="498.7" width="1" height="1" fill="#e8e8e8"/><rect x="1036.0" y="497.8" width="1" height="1" fill="#e8e8e8"/><rect x="1053.0" y="496.8" width="1" height="1" fill="#e8e8e8"/><rect x="1070.0" y="495.9" width="1" height="1" fill="#e8e8e8"/><rect x="1087.0" y="494.9" width="1" height="1" fill="#e8e8e8"/><rect x="1104.0" y="494.0" width="1" height="1" fill="#e8e8e8"/><rect x="1121.0" y="493.0" width="1" height="1" fill="#e8e8e8"/><rect x="1138.0" y="492.1" width="1" height="1" fill="#e8e8e8"/><rect x="1155.0" y="491.1" width="1" height="1" fill="#e8e8e8"/><rect x="1172.0" y="490.2" width="1" height="1" fill="#e8e8e8"/><rect x="1189.0" y="489.2" width="1" height="1" fill="#e8e8e8"/><rect x="1206.0" y="488.2" width="1" height="1" fill="#e8e8e8"/><rect x="942.0" y="546.0" width="1" height="1" fill="#e8e8e8"/><rect x="990.0" y="543.0" width="1" height="1" fill="#e8e8e8"/><rect x="1006.0" y="542.4" width="1" height="1" fill="#e8e8e8"/><rect x="1053.0" y="539.6" width="1" height="1" fill="#e8e8e8"/><rect x="1100.0" y="536.6" width="1" height="1" fill="#e8e8e8"/><rect x="1147.0" y="533.6" width="1" height="1" fill="#e8e8e8"/><g shape-rendering="crispEdges"><polygon points="1140,439.2 1148.5,439.2 1114.8,570.7 1103.8,571.2" fill="#3a1066"/><polygon points="1148.5,439.2 1150.8,446 1123.8,570 1114.8,570.7" fill="#5a5a5a"/><polygon points="880,587.2 1174,566.9 1174,621.7 880,643.1" fill="#31319a"/><polygon points="880,587.2 1174,566.9 1174,571.6 880,592.2" fill="#2d2d93"/><polygon points="880,643.1 1174,621.7 1174,640 880,662.3" fill="#8a8a8a"/></g><clipPath id="cpstrip"><polygon points="880,651.5 1174,629 1174,640 880,662.3"/></clipPath><path d="M904.3 938.0L1175.0 229.5M1029.7 938.0L1175.0 349.2M1156.2 938.0L1175.0 767.2" stroke="#c4c4cc" stroke-width="1" fill="none" shape-rendering="crispEdges" clip-path="url(#cpstrip)"/><line x1="880" y1="651.5" x2="1174" y2="629" stroke="#b6b6ba" stroke-width="1" shape-rendering="crispEdges"/><text x="885.6" y="133.8" font-size="12.2" fill="#333" textLength="53.6" lengthAdjust="spacingAndGlyphs">Perspektif</text></svg></div>
<div id="popup"><div class="ic"></div><span class="tx" id="x30" style="left:35.50px;top:6.18px;font-size:13.9px;line-height:18px;font-family:'Liberation Sans',sans-serif;font-weight:400;color:#454545;transform:scaleX(0.9673);">Obje Özellikleri</span><span class="tx" id="x31" style="left:191.78px;top:6.18px;font-size:13.9px;line-height:18px;font-family:'Liberation Sans',sans-serif;font-weight:400;color:#454545;transform:scaleX(1.0201);">Ctrl+E</span><svg style="left:5px;top:4px" width="22" height="22" viewBox="0 0 22 22"><rect x="0.2" y="1.2" width="4.9" height="18.8" fill="#3f6a90"/><path d="M1.4 3.2H4M1.4 5.6H4M1.4 8H4M1.4 10.4H4M1.4 12.8H4M1.4 15.2H4M1.4 17.6H4" stroke="#9fbad2" stroke-width="0.8"/><path d="M6.4 2L10.6 6.4M13.4 14.6L18 19.6M13 1.6L6 10" stroke="#9a9ea6" stroke-width="1"/><path d="M12.4 9.6L6.6 16.2" stroke="#3f6a90" stroke-width="1.5"/><path d="M19 2.8L13.4 8.6" stroke="#1c2636" stroke-width="4.6"/><path d="M18.6 2.4L14.4 6.6" stroke="#5a7fa8" stroke-width="1.2"/><path d="M11.6 8L14.2 10.6" stroke="#7a5a3a" stroke-width="1.2"/></svg><span class="tx" id="x32" style="left:35.50px;top:32.18px;font-size:13.9px;line-height:18px;font-family:'Liberation Sans',sans-serif;font-weight:400;color:#454545;transform:scaleX(0.9908);">Objeden Ayarları Al</span><svg style="left:5px;top:30px" width="22" height="22" viewBox="0 0 22 22"><g transform="translate(0 2.6)"><rect x="0.6" y="13.4" width="4.4" height="3.6" fill="#9a9a9a"/><path d="M10.6 7.4L4.8 13.6" stroke="#111" stroke-width="3.6" stroke-linecap="round"/><path d="M10.6 7.4L5 13.4" stroke="#fff" stroke-width="1.6" stroke-linecap="round"/><path d="M15.6 2.4L11 6.6" stroke="#1c2636" stroke-width="5.2" stroke-linecap="round"/><path d="M15 2.4L11.4 5.6" stroke="#5a7fa8" stroke-width="1.6" stroke-linecap="round"/><path d="M8.8 5.2L12.8 9.2" stroke="#1c2636" stroke-width="1.8"/></g></svg><span class="tx" id="x33" style="left:35.50px;top:58.18px;font-size:13.9px;line-height:18px;font-family:'Liberation Sans',sans-serif;font-weight:400;color:#454545;transform:scaleX(0.9708);">Objeye Ayarları Ver</span><svg style="left:5px;top:56px" width="22" height="22" viewBox="0 0 22 22"><g transform="translate(0 2.5)"><rect x="11.2" y="1.4" width="8.2" height="7.2" fill="#f2e40e" stroke="#111" stroke-width="1.4"/><path d="M13 4H17.6M13 6.2H17.6" stroke="#222" stroke-width="1"/><path d="M10.6 7.6Q5.8 7.8 5.8 13V15.4" fill="none" stroke="#111" stroke-width="1.3"/><path d="M2.8 12.6L5.8 16L8.8 12.6" fill="none" stroke="#111" stroke-width="1.4"/></g></svg><div class="sep" style="top:83px"></div><span class="tx" id="x34" style="left:35.50px;top:92.18px;font-size:13.9px;line-height:18px;font-family:'Liberation Sans',sans-serif;font-weight:400;color:#454545;transform:scaleX(0.9529);">Obje Edit</span><div class="arr" style="top:95px"></div><span class="tx" id="x35" style="left:35.50px;top:118.18px;font-size:13.9px;line-height:18px;font-family:'Liberation Sans',sans-serif;font-weight:400;color:#454545;transform:scaleX(0.9694);">İlkel Objeler</span><div class="arr" style="top:121px"></div><span class="tx" id="x36" style="left:35.50px;top:144.18px;font-size:13.9px;line-height:18px;font-family:'Liberation Sans',sans-serif;font-weight:400;color:#454545;transform:scaleX(0.9602);">Katmanlar</span><div class="arr" style="top:147px"></div><div class="sep" style="top:169px"></div><span class="tx" id="x37" style="left:35.50px;top:178.18px;font-size:13.9px;line-height:18px;font-family:'Liberation Sans',sans-serif;font-weight:400;color:#454545;transform:scaleX(0.9990);">Mimari İle Uyumlu Yap</span><svg style="left:5px;top:176px" width="22" height="22" viewBox="0 0 22 22"><rect x="0.7" y="1.8" width="18.8" height="17.6" fill="none" stroke="#2b4660" stroke-width="1.3"/><text x="0" y="0" font-size="12.4" font-family="Liberation Mono, monospace" font-weight="400" fill="#2b4660" stroke="#2b4660" stroke-width="0.35" text-anchor="middle" transform="translate(4.9 15.2) scale(0.74 1)">S</text><text x="0" y="0" font-size="12.4" font-family="Liberation Mono, monospace" font-weight="400" fill="#2b4660" stroke="#2b4660" stroke-width="0.35" text-anchor="middle" transform="translate(15.5 15.2) scale(0.74 1)">A</text><path d="M8 11H12.4M10.6 8.8L12.8 11L10.6 13.2" fill="none" stroke="#3f7aa8" stroke-width="1.2"/></svg><div class="hl" style="top:200px"></div><span class="tx" id="x38" style="left:35.50px;top:204.18px;font-size:13.9px;line-height:18px;font-family:'Liberation Sans',sans-serif;font-weight:400;color:#454545;transform:scaleX(0.9810);">Statik İle Uyumlu Yap</span><svg style="left:5px;top:202px" width="22" height="22" viewBox="0 0 22 22"><rect x="0.7" y="1.8" width="18.8" height="17.6" fill="none" stroke="#2b4660" stroke-width="1.3"/><text x="0" y="0" font-size="12.4" font-family="Liberation Mono, monospace" font-weight="400" fill="#2b4660" stroke="#2b4660" stroke-width="0.35" text-anchor="middle" transform="translate(4.9 15.2) scale(0.74 1)">A</text><text x="0" y="0" font-size="12.4" font-family="Liberation Mono, monospace" font-weight="400" fill="#2b4660" stroke="#2b4660" stroke-width="0.35" text-anchor="middle" transform="translate(15.5 15.2) scale(0.74 1)">S</text><path d="M8 11H12.4M10.6 8.8L12.8 11L10.6 13.2" fill="none" stroke="#3f7aa8" stroke-width="1.2"/></svg><div class="sep" style="top:229px"></div><span class="tx" id="x39" style="left:35.50px;top:238.18px;font-size:13.9px;line-height:18px;font-family:'Liberation Sans',sans-serif;font-weight:400;color:#454545;transform:scaleX(0.9375);">Eleman Yükü Ekle</span><div class="arr" style="top:241px"></div><span class="tx" id="x40" style="left:35.50px;top:264.18px;font-size:13.9px;line-height:18px;font-family:'Liberation Sans',sans-serif;font-weight:400;color:#454545;transform:scaleX(0.9672);">Eleman Yükü Değiştir</span><svg style="left:5px;top:262px" width="22" height="22" viewBox="0 0 22 22"><path d="M1 19.4L19.6 1.8M4.6 19.8L13 11.8" stroke="#2b4660" stroke-width="1.5"/><path d="M18.4 5.6L13.6 12.4" stroke="#1c2636" stroke-width="4.4"/><path d="M13 12.6L11.2 15.8" stroke="#3f6a90" stroke-width="2"/><path d="M5.4 3.6L9.4 6.8M9.6 4L9.6 7L6.8 7.2M1.4 7.2L5.6 10.6M5.8 7.6L5.8 10.8L3 11" fill="none" stroke="#2b4660" stroke-width="1.1"/></svg><div class="sep" style="top:289px"></div><span class="tx" id="x41" style="left:35.50px;top:298.18px;font-size:13.9px;line-height:18px;font-family:'Liberation Sans',sans-serif;font-weight:400;color:#454545;transform:scaleX(0.8080);">Taşı</span><svg style="left:5px;top:296px" width="22" height="22" viewBox="0 0 22 22"><path d="M2.0 10.4H17.4M9.7 2.700000000000001V18.1" stroke="#111" stroke-width="1.6"/><path d="M0.5 10.4l3.3000000000000003 -2.7v5.4ZM18.9 10.4l-3.3000000000000003 -2.7v5.4ZM9.7 1.200000000000001l-2.7 3.3000000000000003h5.4ZM9.7 19.6l-2.7 -3.3000000000000003h5.4Z" fill="#111"/></svg><span class="tx" id="x42" style="left:35.50px;top:324.18px;font-size:13.9px;line-height:18px;font-family:'Liberation Sans',sans-serif;font-weight:400;color:#a8a8a8;transform:scaleX(0.8733);">Hızlı Taşı</span><svg style="left:5px;top:322px" width="22" height="22" viewBox="0 0 22 22"><path d="M0.4 5.4H5.6M0.4 8.4H4.6M0.4 11.4H5.6" stroke="#b0bccb" stroke-width="1.2"/><path d="M3.9000000000000004 10.6H18.1M11 3.5V17.7" stroke="#a9b6c7" stroke-width="1.6"/><path d="M2.4000000000000004 10.6l3.2 -2.6v5.2ZM19.6 10.6l-3.2 -2.6v5.2ZM11 2.0l-2.6 3.2h5.2ZM11 19.2l-2.6 -3.2h5.2Z" fill="#a9b6c7"/></svg><span class="tx" id="x43" style="left:35.50px;top:350.18px;font-size:13.9px;line-height:18px;font-family:'Liberation Sans',sans-serif;font-weight:400;color:#454545;transform:scaleX(1.0109);">Döndür</span><svg style="left:5px;top:348px" width="22" height="22" viewBox="0 0 22 22"><path d="M6.6 5.4A6.7 6.7 0 1 0 13 5" fill="none" stroke="#111" stroke-width="2.5"/><path d="M4.6 2.4H10.4V8Z" fill="#111"/></svg><span class="tx" id="x44" style="left:35.50px;top:376.18px;font-size:13.9px;line-height:18px;font-family:'Liberation Sans',sans-serif;font-weight:400;color:#454545;transform:scaleX(0.9695);">Yapıyı Döndür</span><svg style="left:5px;top:374px" width="22" height="22" viewBox="0 0 22 22"><path d="M0.4 10.2H20M10.5 1V19" stroke="#7f9ab4" stroke-width="1.1"/><path d="M5.6 8.4Q5.8 14 10.6 14.2Q15.2 14 15.6 9" fill="none" stroke="#2b4660" stroke-width="1.3"/><path d="M3.6 9.6L5.6 7L7.8 9.6" fill="none" stroke="#2b4660" stroke-width="1.1"/><circle cx="10.5" cy="10.2" r="1.6" fill="#8aa2ba" stroke="#2b4660" stroke-width="0.8"/></svg><span class="tx" id="x45" style="left:35.50px;top:402.18px;font-size:13.9px;line-height:18px;font-family:'Liberation Sans',sans-serif;font-weight:400;color:#454545;transform:scaleX(0.9668);">Düğüm Noktası Taşı</span><svg style="left:5px;top:400px" width="22" height="22" viewBox="0 0 22 22"><path d="M1.6 19.4L9.6 3.6L17.6 19.4" fill="none" stroke="#111" stroke-width="1.3"/><path d="M1.6 19.4L9.6 15L17.6 19.4M9.6 4V15" fill="none" stroke="#111" stroke-width="0.9" stroke-dasharray="1.6 1"/><circle cx="1.8" cy="19.2" r="1.5" fill="#1f5a66"/><circle cx="17.4" cy="19.2" r="1.5" fill="#1f5a66"/><circle cx="9.6" cy="15.2" r="1.7" fill="#1fd8f0"/></svg><span class="tx" id="x46" style="left:35.50px;top:428.18px;font-size:13.9px;line-height:18px;font-family:'Liberation Sans',sans-serif;font-weight:400;color:#454545;transform:scaleX(1.0067);">Düğüm Noktası Döndür</span><svg style="left:5px;top:426px" width="22" height="22" viewBox="0 0 22 22"><path d="M15.4 3.4L0.8 9.6L17.6 17.4" fill="none" stroke="#111" stroke-width="1.2"/><path d="M15.6 3.6Q20.6 9.6 18.4 16.6" fill="none" stroke="#111" stroke-width="1" stroke-dasharray="2 1.2"/><path d="M14.4 16.4L18.6 17.6L19.4 13.6" fill="none" stroke="#111" stroke-width="1.3"/><circle cx="15.6" cy="3.2" r="1.7" fill="#1fd8f0"/></svg><div class="sep" style="top:453px"></div><span class="tx" id="x47" style="left:35.50px;top:462.18px;font-size:13.9px;line-height:18px;font-family:'Liberation Sans',sans-serif;font-weight:400;color:#454545;transform:scaleX(0.8922);">Hizala</span><span class="tx" id="x48" style="left:191.74px;top:462.18px;font-size:13.9px;line-height:18px;font-family:'Liberation Sans',sans-serif;font-weight:400;color:#454545;transform:scaleX(1.0471);">Ctrl+L</span><svg style="left:5px;top:460px" width="22" height="22" viewBox="0 0 22 22"><rect x="1.3" y="2" width="17" height="4.8" fill="#2e4d5f"/><rect x="4.2" y="8.6" width="11.2" height="6.4" fill="#2e4d5f"/><rect x="0.2" y="16.8" width="20" height="2.9" fill="#2e4d5f"/><path d="M9.7 0.8V20" stroke="#f01010" stroke-width="1.3"/></svg><span class="tx" id="x49" style="left:35.50px;top:488.18px;font-size:13.9px;line-height:18px;font-family:'Liberation Sans',sans-serif;font-weight:400;color:#454545;transform:scaleX(0.9500);">Dağıt</span><span class="tx" id="x50" style="left:194.96px;top:488.18px;font-size:13.9px;line-height:18px;font-family:'Liberation Sans',sans-serif;font-weight:400;color:#454545;transform:scaleX(1.0988);">Ctrl+I</span><svg style="left:5px;top:486px" width="22" height="22" viewBox="0 0 22 22"><rect x="15.6" y="12.1" width="3.2" height="3.2" fill="#9ab6c9" stroke="#5f8197" stroke-width="0.6"/><rect x="11.3" y="16.4" width="3.2" height="3.2" fill="#9ab6c9" stroke="#5f8197" stroke-width="0.6"/><rect x="5.1" y="16.4" width="3.2" height="3.2" fill="#9ab6c9" stroke="#5f8197" stroke-width="0.6"/><rect x="0.8" y="12.1" width="3.2" height="3.2" fill="#9ab6c9" stroke="#5f8197" stroke-width="0.6"/><rect x="0.8" y="5.9" width="3.2" height="3.2" fill="#9ab6c9" stroke="#5f8197" stroke-width="0.6"/><rect x="5.1" y="1.6" width="3.2" height="3.2" fill="#9ab6c9" stroke="#5f8197" stroke-width="0.6"/><rect x="11.3" y="1.6" width="3.2" height="3.2" fill="#9ab6c9" stroke="#5f8197" stroke-width="0.6"/><rect x="15.6" y="5.9" width="3.2" height="3.2" fill="#9ab6c9" stroke="#5f8197" stroke-width="0.6"/><path d="M4.8 10.6H14.8M9.8 5.6V15.6" stroke="#f01010" stroke-width="1.3"/><path d="M3.4 10.6L6.2 8.5V12.7ZM16.2 10.6L13.4 8.5V12.7ZM9.8 4.2L7.7 7H11.9ZM9.8 17L7.7 14.2H11.9Z" fill="#f01010"/></svg><div class="sep" style="top:513px"></div><span class="tx" id="x51" style="left:35.50px;top:522.18px;font-size:13.9px;line-height:18px;font-family:'Liberation Sans',sans-serif;font-weight:400;color:#454545;transform:scaleX(0.9508);">Birleştir</span><svg style="left:5px;top:520px" width="22" height="22" viewBox="0 0 22 22"><path d="M0.2 9.2H20" stroke="#000" stroke-width="1.3"/><path d="M8.4 9.2L5.2 7.2V11.2ZM11.6 9.2L14.8 7.2V11.2Z" fill="#000"/><path d="M6.4 5.4L13.6 13M13.6 5.4L6.4 13" stroke="#18b4d8" stroke-width="1.2"/></svg><span class="tx" id="x52" style="left:35.50px;top:548.18px;font-size:13.9px;line-height:18px;font-family:'Liberation Sans',sans-serif;font-weight:400;color:#454545;transform:scaleX(0.9581);">Simetri</span><svg style="left:5px;top:546px" width="22" height="22" viewBox="0 0 22 22"><path d="M0.8 18.2L7.4 4.2V18.2ZM18.6 18.2L12 4.2V18.2Z" fill="#fff" stroke="#111" stroke-width="1.3"/><path d="M0.4 18.6H7.8M11.6 18.6H19" stroke="#111" stroke-width="1.8"/><path d="M9.7 1V20.4" stroke="#c01818" stroke-width="1.2"/></svg><span class="tx" id="x53" style="left:35.50px;top:574.18px;font-size:13.9px;line-height:18px;font-family:'Liberation Sans',sans-serif;font-weight:400;color:#454545;transform:scaleX(0.9671);">Offset</span><svg style="left:5px;top:572px" width="22" height="22" viewBox="0 0 22 22"><g transform="translate(-609.2 -59.6)"><path d="M616 65.5Q616 63.2 619 63.2Q622 63.2 622 65.5V68.6Q628.8 69 628.8 73.3Q628.8 77.6 624 77.6H614Q609.4 77.6 609.4 73.3Q609.4 69 616 68.6Z" fill="#e8e8ec" stroke="#1a1a1a" stroke-width="1.2"/><path d="M618 66.5H620V70.7H624.5Q626.6 70.9 626.6 73.2Q626.6 75.3 624.5 75.4H613.7Q611.6 75.3 611.6 73.2Q611.6 70.9 613.7 70.7H618Z" fill="#f0ecee" stroke="#a41c1c" stroke-width="1.1"/></g></svg><span class="tx" id="x54" style="left:35.50px;top:600.18px;font-size:13.9px;line-height:18px;font-family:'Liberation Sans',sans-serif;font-weight:400;color:#454545;transform:scaleX(0.9191);">Klonla</span><svg style="left:5px;top:598px" width="22" height="22" viewBox="0 0 22 22"><rect x="2" y="3.6" width="7" height="10.4" fill="#aab8d2" stroke="#6f7f9c" stroke-width="1"/><rect x="10.6" y="7.4" width="8" height="12.6" fill="none" stroke="#555" stroke-width="1" stroke-dasharray="1.3 1.2"/><path d="M11.6 3.4Q16.6 1.6 17.6 6" fill="none" stroke="#2b4660" stroke-width="1.2"/><path d="M15.6 5L17.8 7.4L19.6 4.6Z" fill="#2b4660"/></svg><span class="tx" id="x55" style="left:35.50px;top:626.18px;font-size:13.9px;line-height:18px;font-family:'Liberation Sans',sans-serif;font-weight:400;color:#454545;transform:scaleX(0.9735);">Obje Çoğalt</span><svg style="left:5px;top:624px" width="22" height="22" viewBox="0 0 22 22"><rect x="0.8" y="2" width="5" height="8.4" fill="#aab8d2" stroke="#6f7f9c" stroke-width="1"/><rect x="4.2" y="5.2" width="5.4" height="9" fill="#aab8d2" stroke="#6f7f9c" stroke-width="1"/><rect x="8.2" y="9" width="6.6" height="9" fill="#aab8d2" stroke="#6f7f9c" stroke-width="1"/><path d="M9.6 2.6Q13.6 1 14.8 4.4" fill="none" stroke="#2b4660" stroke-width="1.1"/><path d="M13 4L15 6.4L16.6 3.6Z" fill="#2b4660"/></svg><span class="tx" id="x56" style="left:35.50px;top:652.18px;font-size:13.9px;line-height:18px;font-family:'Liberation Sans',sans-serif;font-weight:400;color:#454545;transform:scaleX(0.9626);">Gelişmiş Obje Çoğalt</span><svg style="left:5px;top:650px" width="22" height="22" viewBox="0 0 22 22"><rect x="0.6" y="2" width="6" height="9" fill="#aab8d2" stroke="#6f7f9c" stroke-width="1"/><rect x="7" y="4.4" width="5.6" height="8.6" fill="#aab8d2" stroke="#6f7f9c" stroke-width="1"/><rect x="13" y="2.6" width="6.4" height="9" fill="#aab8d2" stroke="#6f7f9c" stroke-width="1"/><path d="M0.8 15.2Q9 20.4 18.6 16.8" fill="none" stroke="#1f4a5a" stroke-width="1.3"/><path d="M16.4 14.6L19.8 16.4L16.8 19Z" fill="#1f4a5a"/></svg><span class="tx" id="x57" style="left:35.50px;top:678.18px;font-size:13.9px;line-height:18px;font-family:'Liberation Sans',sans-serif;font-weight:400;color:#454545;transform:scaleX(0.9737);">Kutupsal Çoğaltma</span><svg style="left:5px;top:676px" width="22" height="22" viewBox="0 0 22 22"><circle cx="10.0" cy="17.8" r="2.1" fill="#8a8a8a" stroke="#111" stroke-width="1.3"/><circle cx="3.8" cy="14.2" r="2.1" fill="#8a8a8a" stroke="#111" stroke-width="1.3"/><circle cx="3.8" cy="7.0" r="2.1" fill="#8a8a8a" stroke="#111" stroke-width="1.3"/><circle cx="10.0" cy="3.4" r="2.1" fill="#8a8a8a" stroke="#111" stroke-width="1.3"/><circle cx="16.2" cy="7.0" r="2.1" fill="#8a8a8a" stroke="#111" stroke-width="1.3"/><circle cx="16.2" cy="14.2" r="2.1" fill="#8a8a8a" stroke="#111" stroke-width="1.3"/></svg><div class="sep" style="top:703px"></div><span class="tx" id="x58" style="left:35.50px;top:712.18px;font-size:13.9px;line-height:18px;font-family:'Liberation Sans',sans-serif;font-weight:400;color:#454545;transform:scaleX(0.9424);">Blok Yap</span><svg style="left:5px;top:710px" width="22" height="22" viewBox="0 0 22 22"><rect x="0.6" y="1.6" width="19" height="18" fill="#eceff4" stroke="#2b4660" stroke-width="1.3"/><path d="M4.6 5.6H16V12.6" fill="none" stroke="#6f9ac0" stroke-width="1.2"/><path d="M4.6 5.6V15H15.6" fill="none" stroke="#3f6a90" stroke-width="1.2"/><rect x="3" y="4" width="3.2" height="3.2" fill="#2b4660"/><rect x="3" y="13.4" width="3.2" height="3.2" fill="#2b4660"/><rect x="14" y="13.4" width="3.4" height="3.4" fill="#fff" stroke="#2b4660" stroke-width="1"/></svg><span class="tx" id="x59" style="left:35.50px;top:738.18px;font-size:13.9px;line-height:18px;font-family:'Liberation Sans',sans-serif;font-weight:400;color:#454545;transform:scaleX(0.9252);">Obje Parçala</span><svg style="left:5px;top:736px" width="22" height="22" viewBox="0 0 22 22"><path d="M3 18.6L12.6 8.4" stroke="#5a1010" stroke-width="6" stroke-linecap="round"/><path d="M3 18.6L12.6 8.4" stroke="#d82828" stroke-width="4.2" stroke-linecap="round"/><path d="M2.4 17.2L11 8" stroke="#f08080" stroke-width="1.2" stroke-linecap="round"/><path d="M13 8L15 5.6" stroke="#444" stroke-width="1.2"/><path d="M15.4 1.6V4.4M17.6 2.4L16.2 4.6M19.6 5.2L17 6M19.2 8.4L17 7.4M13.2 2.6L14.6 4.6" stroke="#999" stroke-width="1"/></svg><div class="sep" style="top:763px"></div><span class="tx" id="x60" style="left:35.50px;top:772.18px;font-size:13.9px;line-height:18px;font-family:'Liberation Sans',sans-serif;font-weight:400;color:#454545;transform:scaleX(0.9729);">Yüzey Dokusu Değiştir</span><svg style="left:5px;top:770px" width="22" height="22" viewBox="0 0 22 22"><rect x="4.6" y="4" width="13" height="13" fill="#3f7f98" stroke="#2b5f78" stroke-width="0.8"/><rect x="5.4" y="4.8" width="5.2" height="5.2" fill="#5a9ab2"/><rect x="11.8" y="4.8" width="5" height="5.2" fill="#4f8fa8"/><rect x="5.4" y="11.2" width="5.2" height="5" fill="#4f8fa8"/><rect x="11.8" y="11.2" width="5" height="5" fill="#67a7bd"/><path d="M11.2 4V17M4.6 10.6H17.6" stroke="#b4d6e2" stroke-width="1"/></svg><div class="sep" style="top:797px"></div><span class="tx" id="x61" style="left:35.50px;top:806.18px;font-size:13.9px;line-height:18px;font-family:'Liberation Sans',sans-serif;font-weight:400;color:#454545;transform:scaleX(1.0083);">Dönüştür</span><div class="arr" style="top:809px"></div></div>
</div></body></html>
